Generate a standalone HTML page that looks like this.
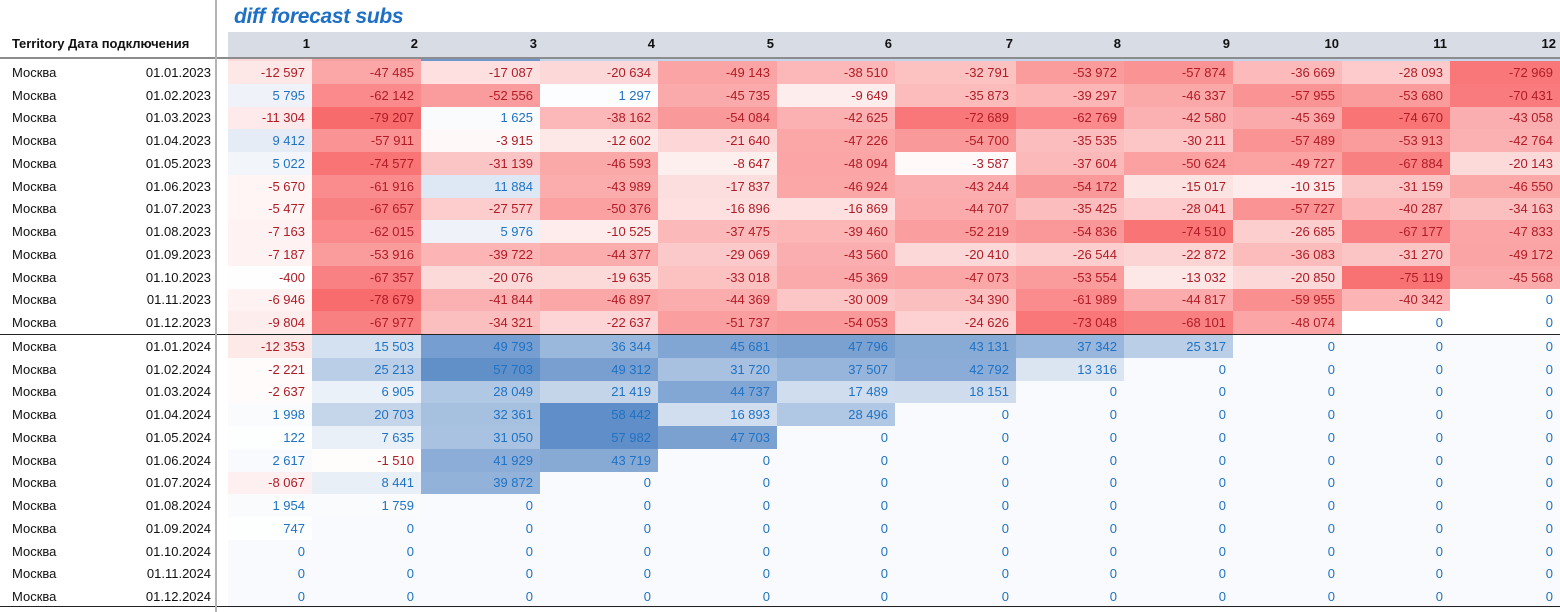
<!DOCTYPE html>
<html><head><meta charset="utf-8"><style>
body{margin:0;width:1560px;height:612px;overflow:hidden;background:#fff;font-family:"Liberation Sans",Arial,sans-serif;position:relative}
.title{position:absolute;left:234px;top:5px;font-size:21px;font-weight:bold;font-style:italic;color:#1f6fc5;letter-spacing:-0.3px}
.hdr{position:absolute;left:228px;top:32px;width:1332px;height:25px;background:#d7dce5}
.hl{position:absolute;left:0;top:57px;width:1560px;height:2px;background:#8c8c8c}
.hrow{position:absolute;left:0;top:36px;height:20px;font-size:13px;font-weight:bold;color:#111;white-space:nowrap}
.vl{position:absolute;left:215px;top:0;width:2px;height:612px;background:#b4b4b4;z-index:5}
table{position:absolute;left:0;top:61px;border-collapse:collapse;table-layout:fixed;font-size:13px}
td{height:22.75px;padding:0 7px 0 0;text-align:right;white-space:nowrap;color:#1f72c4;overflow:hidden}
td.t{text-align:left;padding-left:12px;color:#111}
td.d{color:#111;padding-right:5px}
td.g{padding:0}
td.r{color:#b01c26;background:color-mix(in srgb,#f8696b calc(var(--p)*1%),#fff)}
td.b{background:color-mix(in srgb,#5a8ac6 calc(var(--p)*1%),#fff)}
td.z{background:#f9fafd}
tr.sep td{border-top:1.5px solid #222}
.bot{position:absolute;left:0;top:606px;width:1560px;height:1px;background:#222}
.strip{position:absolute;top:59px;height:2px}
</style></head><body>
<div class="title">diff forecast subs</div>
<div class="hdr"></div>
<div class="hrow" style="left:12px;width:53px;overflow:hidden">Territory</div>
<div class="hrow" style="left:68px">Дата подключения</div>
<div class="hrow" style="left:228px;width:1332px">
<span style="position:absolute;right:1250px">1</span><span style="position:absolute;right:1142px">2</span><span style="position:absolute;right:1023px">3</span><span style="position:absolute;right:905px">4</span><span style="position:absolute;right:786px">5</span><span style="position:absolute;right:668px">6</span><span style="position:absolute;right:547px">7</span><span style="position:absolute;right:439px">8</span><span style="position:absolute;right:330px">9</span><span style="position:absolute;right:221px">10</span><span style="position:absolute;right:113px">11</span><span style="position:absolute;right:4px">12</span></div>
<div class="hl"></div>
<div class="strip" style="left:228px;width:84px;background:#fbd9db"></div>
<div class="strip" style="left:312px;width:109px;background:#f9a0a2"></div>
<div class="strip" style="left:421px;width:119px;background:#6f97cb"></div>
<div class="strip" style="left:540px;width:1020px;background:#c5d5ec"></div>
<div class="vl"></div>
<table>
<colgroup><col style="width:110px"><col style="width:106px"><col style="width:12px"><col style="width:84px"><col style="width:109px"><col style="width:119px"><col style="width:118px"><col style="width:119px"><col style="width:118px"><col style="width:121px"><col style="width:108px"><col style="width:109px"><col style="width:109px"><col style="width:108px"><col style="width:110px"></colgroup>
<tr><td class="t">Москва</td><td class="d">01.01.2023</td><td class="g"></td><td class="r" style="--p:16">-12 597</td><td class="r" style="--p:59">-47 485</td><td class="r" style="--p:21">-17 087</td><td class="r" style="--p:26">-20 634</td><td class="r" style="--p:61">-49 143</td><td class="r" style="--p:48">-38 510</td><td class="r" style="--p:41">-32 791</td><td class="r" style="--p:67">-53 972</td><td class="r" style="--p:72">-57 874</td><td class="r" style="--p:46">-36 669</td><td class="r" style="--p:35">-28 093</td><td class="r" style="--p:91">-72 969</td></tr>
<tr><td class="t">Москва</td><td class="d">01.02.2023</td><td class="g"></td><td class="b" style="--p:10">5 795</td><td class="r" style="--p:78">-62 142</td><td class="r" style="--p:66">-52 556</td><td class="b" style="--p:2">1 297</td><td class="r" style="--p:57">-45 735</td><td class="r" style="--p:12">-9 649</td><td class="r" style="--p:45">-35 873</td><td class="r" style="--p:49">-39 297</td><td class="r" style="--p:58">-46 337</td><td class="r" style="--p:72">-57 955</td><td class="r" style="--p:67">-53 680</td><td class="r" style="--p:88">-70 431</td></tr>
<tr><td class="t">Москва</td><td class="d">01.03.2023</td><td class="g"></td><td class="r" style="--p:14">-11 304</td><td class="r" style="--p:99">-79 207</td><td class="b" style="--p:3">1 625</td><td class="r" style="--p:48">-38 162</td><td class="r" style="--p:68">-54 084</td><td class="r" style="--p:53">-42 625</td><td class="r" style="--p:91">-72 689</td><td class="r" style="--p:78">-62 769</td><td class="r" style="--p:53">-42 580</td><td class="r" style="--p:57">-45 369</td><td class="r" style="--p:93">-74 670</td><td class="r" style="--p:54">-43 058</td></tr>
<tr><td class="t">Москва</td><td class="d">01.04.2023</td><td class="g"></td><td class="b" style="--p:16">9 412</td><td class="r" style="--p:72">-57 911</td><td class="r" style="--p:5">-3 915</td><td class="r" style="--p:16">-12 602</td><td class="r" style="--p:27">-21 640</td><td class="r" style="--p:59">-47 226</td><td class="r" style="--p:68">-54 700</td><td class="r" style="--p:44">-35 535</td><td class="r" style="--p:38">-30 211</td><td class="r" style="--p:72">-57 489</td><td class="r" style="--p:67">-53 913</td><td class="r" style="--p:53">-42 764</td></tr>
<tr><td class="t">Москва</td><td class="d">01.05.2023</td><td class="g"></td><td class="b" style="--p:8">5 022</td><td class="r" style="--p:93">-74 577</td><td class="r" style="--p:39">-31 139</td><td class="r" style="--p:58">-46 593</td><td class="r" style="--p:11">-8 647</td><td class="r" style="--p:60">-48 094</td><td class="r" style="--p:4">-3 587</td><td class="r" style="--p:47">-37 604</td><td class="r" style="--p:63">-50 624</td><td class="r" style="--p:62">-49 727</td><td class="r" style="--p:85">-67 884</td><td class="r" style="--p:25">-20 143</td></tr>
<tr><td class="t">Москва</td><td class="d">01.06.2023</td><td class="g"></td><td class="r" style="--p:7">-5 670</td><td class="r" style="--p:77">-61 916</td><td class="b" style="--p:20">11 884</td><td class="r" style="--p:55">-43 989</td><td class="r" style="--p:22">-17 837</td><td class="r" style="--p:59">-46 924</td><td class="r" style="--p:54">-43 244</td><td class="r" style="--p:68">-54 172</td><td class="r" style="--p:19">-15 017</td><td class="r" style="--p:13">-10 315</td><td class="r" style="--p:39">-31 159</td><td class="r" style="--p:58">-46 550</td></tr>
<tr><td class="t">Москва</td><td class="d">01.07.2023</td><td class="g"></td><td class="r" style="--p:7">-5 477</td><td class="r" style="--p:85">-67 657</td><td class="r" style="--p:34">-27 577</td><td class="r" style="--p:63">-50 376</td><td class="r" style="--p:21">-16 896</td><td class="r" style="--p:21">-16 869</td><td class="r" style="--p:56">-44 707</td><td class="r" style="--p:44">-35 425</td><td class="r" style="--p:35">-28 041</td><td class="r" style="--p:72">-57 727</td><td class="r" style="--p:50">-40 287</td><td class="r" style="--p:43">-34 163</td></tr>
<tr><td class="t">Москва</td><td class="d">01.08.2023</td><td class="g"></td><td class="r" style="--p:9">-7 163</td><td class="r" style="--p:78">-62 015</td><td class="b" style="--p:10">5 976</td><td class="r" style="--p:13">-10 525</td><td class="r" style="--p:47">-37 475</td><td class="r" style="--p:49">-39 460</td><td class="r" style="--p:65">-52 219</td><td class="r" style="--p:69">-54 836</td><td class="r" style="--p:93">-74 510</td><td class="r" style="--p:33">-26 685</td><td class="r" style="--p:84">-67 177</td><td class="r" style="--p:60">-47 833</td></tr>
<tr><td class="t">Москва</td><td class="d">01.09.2023</td><td class="g"></td><td class="r" style="--p:9">-7 187</td><td class="r" style="--p:67">-53 916</td><td class="r" style="--p:50">-39 722</td><td class="r" style="--p:55">-44 377</td><td class="r" style="--p:36">-29 069</td><td class="r" style="--p:54">-43 560</td><td class="r" style="--p:26">-20 410</td><td class="r" style="--p:33">-26 544</td><td class="r" style="--p:29">-22 872</td><td class="r" style="--p:45">-36 083</td><td class="r" style="--p:39">-31 270</td><td class="r" style="--p:61">-49 172</td></tr>
<tr><td class="t">Москва</td><td class="d">01.10.2023</td><td class="g"></td><td class="r" style="--p:1">-400</td><td class="r" style="--p:84">-67 357</td><td class="r" style="--p:25">-20 076</td><td class="r" style="--p:25">-19 635</td><td class="r" style="--p:41">-33 018</td><td class="r" style="--p:57">-45 369</td><td class="r" style="--p:59">-47 073</td><td class="r" style="--p:67">-53 554</td><td class="r" style="--p:16">-13 032</td><td class="r" style="--p:26">-20 850</td><td class="r" style="--p:94">-75 119</td><td class="r" style="--p:57">-45 568</td></tr>
<tr><td class="t">Москва</td><td class="d">01.11.2023</td><td class="g"></td><td class="r" style="--p:9">-6 946</td><td class="r" style="--p:98">-78 679</td><td class="r" style="--p:52">-41 844</td><td class="r" style="--p:59">-46 897</td><td class="r" style="--p:55">-44 369</td><td class="r" style="--p:38">-30 009</td><td class="r" style="--p:43">-34 390</td><td class="r" style="--p:77">-61 989</td><td class="r" style="--p:56">-44 817</td><td class="r" style="--p:75">-59 955</td><td class="r" style="--p:50">-40 342</td><td>0</td></tr>
<tr><td class="t">Москва</td><td class="d">01.12.2023</td><td class="g"></td><td class="r" style="--p:12">-9 804</td><td class="r" style="--p:85">-67 977</td><td class="r" style="--p:43">-34 321</td><td class="r" style="--p:28">-22 637</td><td class="r" style="--p:65">-51 737</td><td class="r" style="--p:68">-54 053</td><td class="r" style="--p:31">-24 626</td><td class="r" style="--p:91">-73 048</td><td class="r" style="--p:85">-68 101</td><td class="r" style="--p:60">-48 074</td><td>0</td><td>0</td></tr>
<tr class="sep"><td class="t">Москва</td><td class="d">01.01.2024</td><td class="g"></td><td class="r" style="--p:15">-12 353</td><td class="b" style="--p:26">15 503</td><td class="b" style="--p:83">49 793</td><td class="b" style="--p:61">36 344</td><td class="b" style="--p:76">45 681</td><td class="b" style="--p:80">47 796</td><td class="b" style="--p:72">43 131</td><td class="b" style="--p:62">37 342</td><td class="b" style="--p:42">25 317</td><td class="z">0</td><td class="z">0</td><td class="z">0</td></tr>
<tr><td class="t">Москва</td><td class="d">01.02.2024</td><td class="g"></td><td class="r" style="--p:3">-2 221</td><td class="b" style="--p:42">25 213</td><td class="b" style="--p:96">57 703</td><td class="b" style="--p:82">49 312</td><td class="b" style="--p:53">31 720</td><td class="b" style="--p:63">37 507</td><td class="b" style="--p:71">42 792</td><td class="b" style="--p:22">13 316</td><td class="z">0</td><td class="z">0</td><td class="z">0</td><td class="z">0</td></tr>
<tr><td class="t">Москва</td><td class="d">01.03.2024</td><td class="g"></td><td class="r" style="--p:3">-2 637</td><td class="b" style="--p:12">6 905</td><td class="b" style="--p:47">28 049</td><td class="b" style="--p:36">21 419</td><td class="b" style="--p:75">44 737</td><td class="b" style="--p:29">17 489</td><td class="b" style="--p:30">18 151</td><td class="z">0</td><td class="z">0</td><td class="z">0</td><td class="z">0</td><td class="z">0</td></tr>
<tr><td class="t">Москва</td><td class="d">01.04.2024</td><td class="g"></td><td class="b" style="--p:3">1 998</td><td class="b" style="--p:35">20 703</td><td class="b" style="--p:54">32 361</td><td class="b" style="--p:97">58 442</td><td class="b" style="--p:28">16 893</td><td class="b" style="--p:47">28 496</td><td class="z">0</td><td class="z">0</td><td class="z">0</td><td class="z">0</td><td class="z">0</td><td class="z">0</td></tr>
<tr><td class="t">Москва</td><td class="d">01.05.2024</td><td class="g"></td><td class="b" style="--p:1">122</td><td class="b" style="--p:13">7 635</td><td class="b" style="--p:52">31 050</td><td class="b" style="--p:97">57 982</td><td class="b" style="--p:80">47 703</td><td class="z">0</td><td class="z">0</td><td class="z">0</td><td class="z">0</td><td class="z">0</td><td class="z">0</td><td class="z">0</td></tr>
<tr><td class="t">Москва</td><td class="d">01.06.2024</td><td class="g"></td><td class="b" style="--p:4">2 617</td><td class="r" style="--p:2">-1 510</td><td class="b" style="--p:70">41 929</td><td class="b" style="--p:73">43 719</td><td class="z">0</td><td class="z">0</td><td class="z">0</td><td class="z">0</td><td class="z">0</td><td class="z">0</td><td class="z">0</td><td class="z">0</td></tr>
<tr><td class="t">Москва</td><td class="d">01.07.2024</td><td class="g"></td><td class="r" style="--p:10">-8 067</td><td class="b" style="--p:14">8 441</td><td class="b" style="--p:66">39 872</td><td class="z">0</td><td class="z">0</td><td class="z">0</td><td class="z">0</td><td class="z">0</td><td class="z">0</td><td class="z">0</td><td class="z">0</td><td class="z">0</td></tr>
<tr><td class="t">Москва</td><td class="d">01.08.2024</td><td class="g"></td><td class="b" style="--p:3">1 954</td><td class="b" style="--p:3">1 759</td><td class="z">0</td><td class="z">0</td><td class="z">0</td><td class="z">0</td><td class="z">0</td><td class="z">0</td><td class="z">0</td><td class="z">0</td><td class="z">0</td><td class="z">0</td></tr>
<tr><td class="t">Москва</td><td class="d">01.09.2024</td><td class="g"></td><td class="b" style="--p:1">747</td><td class="z">0</td><td class="z">0</td><td class="z">0</td><td class="z">0</td><td class="z">0</td><td class="z">0</td><td class="z">0</td><td class="z">0</td><td class="z">0</td><td class="z">0</td><td class="z">0</td></tr>
<tr><td class="t">Москва</td><td class="d">01.10.2024</td><td class="g"></td><td class="z">0</td><td class="z">0</td><td class="z">0</td><td class="z">0</td><td class="z">0</td><td class="z">0</td><td class="z">0</td><td class="z">0</td><td class="z">0</td><td class="z">0</td><td class="z">0</td><td class="z">0</td></tr>
<tr><td class="t">Москва</td><td class="d">01.11.2024</td><td class="g"></td><td class="z">0</td><td class="z">0</td><td class="z">0</td><td class="z">0</td><td class="z">0</td><td class="z">0</td><td class="z">0</td><td class="z">0</td><td class="z">0</td><td class="z">0</td><td class="z">0</td><td class="z">0</td></tr>
<tr><td class="t">Москва</td><td class="d">01.12.2024</td><td class="g"></td><td class="z">0</td><td class="z">0</td><td class="z">0</td><td class="z">0</td><td class="z">0</td><td class="z">0</td><td class="z">0</td><td class="z">0</td><td class="z">0</td><td class="z">0</td><td class="z">0</td><td class="z">0</td></tr>
</table>
<div class="bot"></div>
</body></html>
